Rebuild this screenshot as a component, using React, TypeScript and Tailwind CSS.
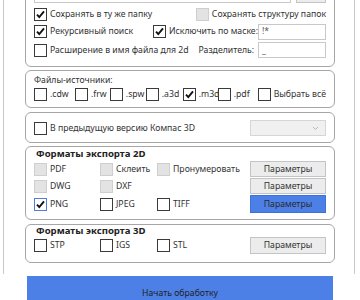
import React from "react";

type CbProps = { checked?: boolean; disabled?: boolean; focus?: boolean; label?: string; className?: string };

function Box({ checked, disabled, focus }: { checked?: boolean; disabled?: boolean; focus?: boolean }) {
  const cls = disabled
    ? "w-[13px] h-[13px] shrink-0 border border-[#cfcfcf] bg-[#e3e3e3] flex items-center justify-center"
    : focus
    ? "w-[13px] h-[13px] shrink-0 border border-[#4f7fd8] bg-white flex items-center justify-center"
    : "w-[13px] h-[13px] shrink-0 border border-[#3a3a3a] bg-white flex items-center justify-center";
  return (
    <span className={cls}>
      {checked && (
        <svg width="11" height="11" viewBox="0 0 11 11">
          <path d="M2 5.6 L4.3 8.1 L9 2.4" stroke="#111" strokeWidth="1.9" fill="none" />
        </svg>
      )}
    </span>
  );
}

function Cb({ checked, disabled, focus, label, className }: CbProps) {
  return (
    <div className={"flex items-center gap-[3px] whitespace-nowrap " + (className ?? "")}>
      <Box checked={checked} disabled={disabled} focus={focus} />
      {label && <span className="leading-none">{label}</span>}
    </div>
  );
}

function Btn({ blue }: { blue?: boolean }) {
  return (
    <div
      className={
        blue
          ? "w-[76px] h-full flex items-center justify-center border border-[#3f72d6] bg-[#4d80e6] text-[#2a2a2a] leading-none"
          : "w-[76px] h-full flex items-center justify-center border border-[#c4c4c4] bg-[#ececec] text-[#333] leading-none"
      }
    >
      Параметры
    </div>
  );
}

function Input({ value }: { value: string }) {
  return (
    <div className="w-[68px] h-[16px] border border-[#c8c8c8] bg-white flex items-center pl-[3px] leading-none text-[#555]">
      {value}
    </div>
  );
}

export default function App() {
  return (
    <div className="w-[360px] h-[300px] overflow-hidden bg-white text-[8.7px] text-[#333] font-['Noto_Sans',sans-serif]">
      <div className="ml-[3px] w-[352px] h-[300px] border-x border-[#c9c9c9] pl-[21px] pr-[19px]">
        <div className="mt-[-26px] flex flex-col">
          {/* Group 1 */}
          <div className="rounded-[6px] border border-[#a6a6a6] pt-[7px] pb-[8px] pl-[8px] pr-[8px] flex flex-col">
            <div className="h-[21px] flex items-stretch gap-[5px]">
              <div className="w-[257px] border border-[#c8c8c8] bg-white" />
              <div className="w-[30px] border border-[#c4c4c4] bg-[#ececec]" />
            </div>
            <div className="mt-[2px] h-[18px] flex items-center justify-between">
              <Cb checked label="Сохранять в ту же папку" />
              <Cb disabled label="Сохранять структуру папок" />
            </div>
            <div className="h-[17px] flex items-center">
              <Cb checked label="Рекурсивный поиск" className="w-[119px]" />
              <Cb checked label="Исключить по маске:" />
              <div className="ml-auto">
                <Input value="!*" />
              </div>
            </div>
            <div className="mt-[2px] h-[16px] flex items-center">
              <Cb label="Расширение в имя файла для 2d" />
              <span className="ml-auto mr-[4px] leading-none">Разделитель:</span>
              <Input value="_" />
            </div>
          </div>

          {/* Group 2 */}
          <div className="mt-[3px] rounded-[6px] border border-[#a6a6a6] pt-[3px] pb-[6px] pl-[8px] pr-[8px] flex flex-col">
            <div className="h-[13px] flex items-center leading-none">Файлы-источники:</div>
            <div className="h-[13px] mt-[1px] flex items-center">
              <Cb label=".cdw" className="w-[41px]" />
              <Cb label=".frw" className="w-[35px]" />
              <Cb label=".spw" className="w-[36px]" />
              <Cb label=".a3d" className="w-[37px]" />
              <Cb checked label=".m3d" className="w-[35px]" />
              <Cb label=".pdf" className="w-[40px]" />
              <Cb label="Выбрать всё" />
            </div>
          </div>

          {/* Group 3 */}
          <div className="mt-[4px] rounded-[6px] border border-[#a6a6a6] pt-[6px] pb-[5px] pl-[8px] pr-[8px]">
            <div className="h-[18px] flex items-center justify-between">
              <Cb label="В предыдущую версию Компас 3D" />
              <div className="w-[76px] h-[16px] border border-[#d6d6d6] bg-[#f0f0f0] flex items-center justify-end pr-[6px]">
                <svg width="7" height="5" viewBox="0 0 7 5">
                  <path d="M1 1 L3.5 3.5 L6 1" stroke="#b8b8b8" strokeWidth="1" fill="none" />
                </svg>
              </div>
            </div>
          </div>

          {/* Group 4 */}
          <div className="mt-[3px] rounded-[6px] border border-[#a6a6a6] pb-[6px] pl-[8px] pr-[8px] flex flex-col">
            <div className="h-[14px] flex items-center ml-[2px] font-bold text-[9.6px] text-[#222] leading-none">
              Форматы экспорта 2D
            </div>
            <div className="h-[16px] grid grid-cols-[66px_57px_1fr_76px] items-center">
              <Cb disabled label="PDF" />
              <Cb disabled label="Склеить" />
              <Cb disabled label="Пронумеровать" />
              <Btn />
            </div>
            <div className="mt-[1px] h-[16px] grid grid-cols-[66px_57px_1fr_76px] items-center">
              <Cb disabled label="DWG" />
              <Cb disabled label="DXF" />
              <div />
              <Btn />
            </div>
            <div className="mt-[1px] h-[18px] grid grid-cols-[66px_57px_1fr_76px] items-center">
              <Cb checked focus label="PNG" />
              <Cb label="JPEG" />
              <Cb label="TIFF" />
              <Btn blue />
            </div>
          </div>

          {/* Group 5 */}
          <div className="mt-[4px] rounded-[6px] border border-[#a6a6a6] pb-[8px] pl-[8px] pr-[8px] flex flex-col">
            <div className="h-[12px] flex items-center ml-[2px] font-bold text-[9.6px] text-[#222] leading-none">
              Форматы экспорта 3D
            </div>
            <div className="h-[17px] grid grid-cols-[66px_57px_1fr_76px] items-center">
              <Cb label="STP" />
              <Cb label="IGS" />
              <Cb label="STL" />
              <Btn />
            </div>
          </div>

          {/* Start button */}
          <div className="mt-[13px] mx-[2px] h-[34px] bg-[#4d80e6] flex items-center justify-center text-[#222] leading-none">
            Начать обработку
          </div>
        </div>
      </div>
    </div>
  );
}
